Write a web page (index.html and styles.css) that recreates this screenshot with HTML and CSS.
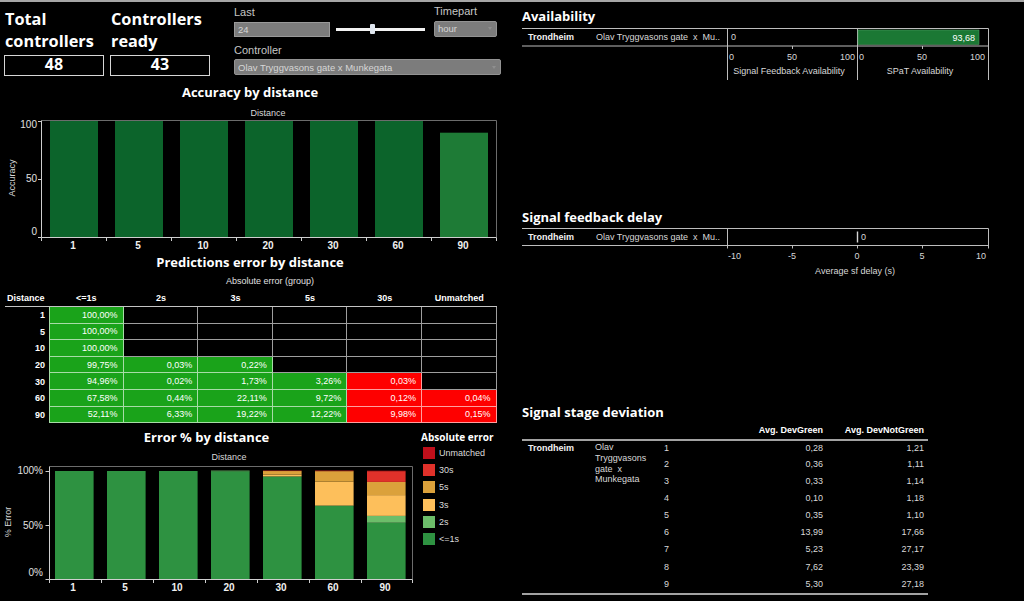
FILE: index.html
```html
<!DOCTYPE html>
<html lang="en">
<head>
<meta charset="utf-8">
<title>Controllers dashboard</title>
<link rel="stylesheet" href="styles.css">
</head>
<body>
<div class="page">
  <div class="left">
    <div class="top">
      <div class="kpi kpi-first">
        <div class="kpi-title">Total<br>controllers</div>
        <div class="kpi-box">48</div>
      </div>
      <div class="kpi">
        <div class="kpi-title">Controllers<br>ready</div>
        <div class="kpi-box">43</div>
      </div>
      <div class="controls">
        <div class="ctrl-row">
          <div class="field">
            <div class="label">Last</div>
            <div class="last-row">
              <div class="input">24</div>
              <div class="slider"><span class="thumb"></span></div>
            </div>
          </div>
          <div class="field timepart">
            <div class="label">Timepart</div>
            <div class="select select-small"><span>hour</span><span class="arrow"></span></div>
          </div>
        </div>
        <div class="field controller">
          <div class="label">Controller</div>
          <div class="select select-wide"><span>Olav Tryggvasons gate x Munkegata</span><span class="arrow"></span></div>
        </div>
      </div>
    </div>

    <section class="block">
      <h2 class="title">Accuracy by distance</h2>
      <svg class="chart" width="500" height="154" viewBox="0 0 500 154">
        <text x="268" y="16" text-anchor="middle">Distance</text>
        <text transform="translate(15 78) rotate(-90)" text-anchor="middle">Accuracy</text>
        <rect x="50" y="21" width="48" height="116" fill="#0c642b"/>
        <rect x="115" y="21" width="48" height="116" fill="#0c642b"/>
        <rect x="180" y="21" width="48" height="116" fill="#0c642b"/>
        <rect x="245" y="21" width="48" height="116" fill="#0c642b"/>
        <rect x="310" y="21" width="48" height="116" fill="#0c642b"/>
        <rect x="375" y="21" width="48" height="116" fill="#0c642b"/>
        <rect x="440" y="32.7" width="48" height="104.3" fill="#1e7b36"/>
        <path d="M41.5 20.5 H496.5 V137" stroke="#6c6c6c" fill="none"/>
        <path d="M41.5 20.5 V137.5 H496.5" stroke="#cfcfcf" fill="none"/>
        <path d="M38 21.5 H41.5 M38 79.5 H41.5 M38 137.5 H41.5" stroke="#cfcfcf"/>
        <path d="M41.5 137.5 V141 M106.5 137.5 V141 M171.5 137.5 V141 M236.5 137.5 V141 M301.5 137.5 V141 M366.5 137.5 V141 M431.5 137.5 V141 M496.5 137.5 V141" stroke="#cfcfcf"/>
        <text class="tick" x="37" y="28" text-anchor="end">100</text>
        <text class="tick" x="37" y="82" text-anchor="end">50</text>
        <text class="tick" x="37" y="135" text-anchor="end">0</text>
        <text class="xl" x="73" y="149" text-anchor="middle">1</text>
        <text class="xl" x="138" y="149" text-anchor="middle">5</text>
        <text class="xl" x="203" y="149" text-anchor="middle">10</text>
        <text class="xl" x="268" y="149" text-anchor="middle">20</text>
        <text class="xl" x="333" y="149" text-anchor="middle">30</text>
        <text class="xl" x="398" y="149" text-anchor="middle">60</text>
        <text class="xl" x="463" y="149" text-anchor="middle">90</text>
      </svg>
    </section>

    <section class="block">
      <h2 class="title">Predictions error by distance</h2>
      <div class="caption">Absolute error (group)</div>
      <table class="pred">
        <colgroup><col class="pd"><col class="pc"><col class="pc"><col class="pc"><col class="pc"><col class="pc"><col class="pc"></colgroup>
        <thead>
          <tr><th class="dist-h">Distance</th><th>&lt;=1s</th><th>2s</th><th>3s</th><th>5s</th><th>30s</th><th>Unmatched</th></tr>
        </thead>
        <tbody>
          <tr><th>1</th><td class="g">100,00%</td><td></td><td></td><td></td><td></td><td></td></tr>
          <tr><th>5</th><td class="g">100,00%</td><td></td><td></td><td></td><td></td><td></td></tr>
          <tr><th>10</th><td class="g">100,00%</td><td></td><td></td><td></td><td></td><td></td></tr>
          <tr><th>20</th><td class="g">99,75%</td><td class="g">0,03%</td><td class="g">0,22%</td><td></td><td></td><td></td></tr>
          <tr><th>30</th><td class="g">94,96%</td><td class="g">0,02%</td><td class="g">1,73%</td><td class="g">3,26%</td><td class="r">0,03%</td><td></td></tr>
          <tr><th>60</th><td class="g">67,58%</td><td class="g">0,44%</td><td class="g">22,11%</td><td class="g">9,72%</td><td class="r">0,12%</td><td class="r">0,04%</td></tr>
          <tr><th>90</th><td class="g">52,11%</td><td class="g">6,33%</td><td class="g">19,22%</td><td class="g">12,22%</td><td class="r">9,98%</td><td class="r">0,15%</td></tr>
        </tbody>
      </table>
    </section>

    <section class="block error-block">
      <div class="error-chart">
        <h2 class="title">Error % by distance</h2>
        <svg class="chart" width="413" height="156" viewBox="0 0 413 156">
          <text x="229" y="15" text-anchor="middle">Distance</text>
          <text transform="translate(11 77) rotate(-90)" text-anchor="middle">% Error</text>
          <rect x="55" y="26" width="38.6" height="108" fill="#2e9241"/>
          <rect x="107" y="26" width="38.6" height="108" fill="#2e9241"/>
          <rect x="159" y="26" width="38.6" height="108" fill="#2e9241"/>
          <rect x="211" y="26.27" width="38.6" height="107.73" fill="#2e9241"/>
          <rect x="211" y="25.6" width="38.6" height="0.7" fill="#6cbd6a"/>
          <rect x="263" y="31.44" width="38.6" height="102.56" fill="#2e9241"/>
          <rect x="263" y="29.55" width="38.6" height="1.89" fill="#fdbf5b"/>
          <rect x="263" y="26.03" width="38.6" height="3.52" fill="#dba13b"/>
          <rect x="263" y="25.6" width="38.6" height="0.45" fill="#e0312a"/>
          <rect x="315" y="61.01" width="38.6" height="72.99" fill="#2e9241"/>
          <rect x="315" y="60.53" width="38.6" height="0.48" fill="#6cbd6a"/>
          <rect x="315" y="36.65" width="38.6" height="23.88" fill="#fdbf5b"/>
          <rect x="315" y="26.15" width="38.6" height="10.5" fill="#dba13b"/>
          <rect x="315" y="25.6" width="38.6" height="0.55" fill="#e0312a"/>
          <rect x="367" y="77.72" width="38.6" height="56.28" fill="#2e9241"/>
          <rect x="367" y="70.88" width="38.6" height="6.84" fill="#6cbd6a"/>
          <rect x="367" y="50.12" width="38.6" height="20.76" fill="#fdbf5b"/>
          <rect x="367" y="36.92" width="38.6" height="13.2" fill="#dba13b"/>
          <rect x="367" y="26.14" width="38.6" height="10.78" fill="#e0312a"/>
          <rect x="367" y="25.7" width="38.6" height="0.44" fill="#bf0f1b"/>
          <path d="M49.5 21.5 H412.5 V134" stroke="#6c6c6c" fill="none"/>
          <path d="M49.5 21.5 V134.5 H412.5" stroke="#cfcfcf" fill="none"/>
          <path d="M45.5 26.5 H49.5 M45.5 80.5 H49.5 M45.5 134.5 H49.5" stroke="#cfcfcf"/>
          <path d="M49.5 134.5 V138 M101.5 134.5 V138 M153.5 134.5 V138 M205.5 134.5 V138 M257.5 134.5 V138 M309.5 134.5 V138 M361.5 134.5 V138 M412.5 134.5 V138" stroke="#cfcfcf"/>
          <text class="tick" x="43" y="28.5" text-anchor="end">100%</text>
          <text class="tick" x="43" y="84" text-anchor="end">50%</text>
          <text class="tick" x="43" y="131" text-anchor="end">0%</text>
          <text class="xl" x="73" y="146" text-anchor="middle">1</text>
          <text class="xl" x="125" y="146" text-anchor="middle">5</text>
          <text class="xl" x="177" y="146" text-anchor="middle">10</text>
          <text class="xl" x="229" y="146" text-anchor="middle">20</text>
          <text class="xl" x="281" y="146" text-anchor="middle">30</text>
          <text class="xl" x="333" y="146" text-anchor="middle">60</text>
          <text class="xl" x="385" y="146" text-anchor="middle">90</text>
        </svg>
      </div>
      <div class="legend">
        <div class="legend-title">Absolute error</div>
        <div class="legend-item"><span class="sw sw-unm"></span>Unmatched</div>
        <div class="legend-item"><span class="sw sw-30"></span>30s</div>
        <div class="legend-item"><span class="sw sw-5"></span>5s</div>
        <div class="legend-item"><span class="sw sw-3"></span>3s</div>
        <div class="legend-item"><span class="sw sw-2"></span>2s</div>
        <div class="legend-item"><span class="sw sw-1"></span>&lt;=1s</div>
      </div>
    </section>
  </div>

  <div class="right">
    <h2 class="title rtitle first">Availability</h2>
    <svg class="chart" width="470" height="57" viewBox="0 0 470 57">
      <path d="M0 3.5 H466.5 M0 21 H466.5" stroke="#bdbdbd" fill="none"/>
      <path d="M205.5 3.5 V55 M335.5 3.5 V55 M466.5 3.5 V55" stroke="#bdbdbd" fill="none"/>
      <text class="b" x="6" y="15">Trondheim</text>
      <text x="74" y="15">Olav Tryggvasons gate&#160;&#160;x&#160;&#160;Mu..</text>
      <text x="209" y="15">0</text>
      <rect x="336" y="5" width="121" height="14.5" fill="#1b7834" stroke="#4f9a62" stroke-width="0.6"/>
      <text class="w" x="453" y="15.5" text-anchor="end">93,68</text>
      <path d="M270.5 21 V24 M400.5 21 V24" stroke="#bdbdbd"/>
      <text x="207" y="34.5">0</text>
      <text x="270" y="34.5" text-anchor="middle">50</text>
      <text x="333" y="34.5" text-anchor="end">100</text>
      <text x="337" y="34.5">0</text>
      <text x="400" y="34.5" text-anchor="middle">50</text>
      <text x="463" y="34.5" text-anchor="end">100</text>
      <text x="267" y="49" text-anchor="middle">Signal Feedback Availability</text>
      <text x="398" y="49" text-anchor="middle">SPaT Availability</text>
    </svg>

    <h2 class="title rtitle gap">Signal feedback delay</h2>
    <svg class="chart" width="470" height="50" viewBox="0 0 470 50">
      <path d="M0 2.5 H466.5 M0 19.5 H466.5" stroke="#bdbdbd" fill="none"/>
      <path d="M205.5 2.5 V22.5 M466.5 2.5 V22.5 M270.5 19.5 V22.5 M335.5 19.5 V22.5 M400.5 19.5 V22.5" stroke="#bdbdbd" fill="none"/>
      <path d="M335.5 5.5 V16.5" stroke="#d6d6d6" stroke-width="1.4"/>
      <text class="b" x="6" y="14">Trondheim</text>
      <text x="74" y="14">Olav Tryggvasons gate&#160;&#160;x&#160;&#160;Mu..</text>
      <text x="339" y="14">0</text>
      <text x="206" y="33">-10</text>
      <text x="270" y="33" text-anchor="middle">-5</text>
      <text x="335" y="33" text-anchor="middle">0</text>
      <text x="400" y="33" text-anchor="middle">5</text>
      <text x="464" y="33" text-anchor="end">10</text>
      <text x="333" y="47.5" text-anchor="middle">Average sf delay (s)</text>
    </svg>

    <h2 class="title rtitle gap2">Signal stage deviation</h2>
    <table class="stage">
      <colgroup><col class="c1"><col class="c2"><col class="c3"><col class="c4"><col class="c5"></colgroup>
      <thead>
        <tr><th></th><th></th><th></th><th class="num">Avg. DevGreen</th><th class="num">Avg. DevNotGreen</th></tr>
      </thead>
      <tbody>
        <tr><td class="city" rowspan="9">Trondheim</td><td class="ctrl" rowspan="9">Olav Tryggvasons gate&nbsp; x&nbsp; Munkegata</td><td>1</td><td class="num">0,28</td><td class="num">1,21</td></tr>
        <tr><td>2</td><td class="num">0,36</td><td class="num">1,11</td></tr>
        <tr><td>3</td><td class="num">0,33</td><td class="num">1,14</td></tr>
        <tr><td>4</td><td class="num">0,10</td><td class="num">1,18</td></tr>
        <tr><td>5</td><td class="num">0,35</td><td class="num">1,10</td></tr>
        <tr><td>6</td><td class="num">13,99</td><td class="num">17,66</td></tr>
        <tr><td>7</td><td class="num">5,23</td><td class="num">27,17</td></tr>
        <tr><td>8</td><td class="num">7,62</td><td class="num">23,39</td></tr>
        <tr><td>9</td><td class="num">5,30</td><td class="num">27,18</td></tr>
      </tbody>
    </table>
  </div>
</div>
</body>
</html>
```

FILE: styles.css
```css
* { box-sizing: border-box; }
html, body { margin: 0; padding: 0; overflow: hidden; background: #000; }
body {
  width: 1024px;
  height: 601px;
  color: #e2e2e2;
  font-family: "Liberation Sans", Arial, sans-serif;
  font-size: 9px;
  border-top: 2px solid #a6a6a6;
}
.page { display: flex; align-items: flex-start; }
.left { width: 515px; flex: none; }
.right { flex: 1; padding-left: 7px; }

/* top row */
.top { display: flex; align-items: flex-start; height: 82px; }
.kpi { width: 100px; margin-top: 5.5px; margin-left: 6px; }
.kpi-first { margin-left: 4px; }
.kpi-title {
  font-family: "Open Sans", "Liberation Sans", sans-serif;
  font-weight: 700;
  font-size: 16.3px;
  line-height: 22.3px;
  padding-left: 1px;
  color: #fff;
  white-space: nowrap;
}
.kpi-box {
  margin-top: 3px;
  height: 21px;
  border: 1px solid #d6d6d6;
  text-align: center;
  font-family: "Open Sans", "Liberation Sans", sans-serif;
  font-weight: 700;
  font-size: 16px;
  line-height: 17px;
  color: #fff;
}
.controls { margin-left: 24px; margin-top: 3.5px; width: 267px; }
.ctrl-row { display: flex; }
.label { font-size: 11px; line-height: 13px; color: #c6c6c6; margin-bottom: 3px; }
.last-row { display: flex; align-items: center; }
.input {
  width: 96px; height: 15px;
  background: #7c7c7c; border: 1px solid #9a9a9a;
  color: #d6d6d6; font-size: 9.5px; line-height: 13px; padding-left: 3px;
}
.slider { width: 89px; height: 3px; margin-left: 6px; background: #f2f2f2; position: relative; }
.thumb {
  position: absolute; left: 34px; top: -4px;
  width: 5px; height: 10px; background: #dfe6ef; border-radius: 1px;
}
.timepart { margin-left: 9px; margin-top: -1px; }
.select {
  display: flex; justify-content: space-between; align-items: center;
  height: 16px; background: #7c7c7c; border: 1px solid #939393; border-radius: 2px;
  color: #d6d6d6; font-size: 9.5px; padding: 0 4px 0 3px;
}
.select-small { width: 63px; margin-top: 1px; }
.select-wide { width: 267px; }
.arrow { width: 0; height: 0; border-left: 2.5px solid transparent; border-right: 2.5px solid transparent; border-top: 3px solid #8f8f8f; }
.controller { margin-top: 7px; }
.controller .label { margin-bottom: 2.5px; }

/* sections */
.block { width: 500px; }
.title {
  margin: 0;
  font-family: "Open Sans", "Liberation Sans", sans-serif;
  font-weight: 700;
  font-size: 13px;
  line-height: 16px;
  color: #fff;
  text-align: center;
}
.chart { display: block; }
.chart text { font-family: "Liberation Sans", Arial, sans-serif; font-size: 9px; fill: #d8d8d8; }
.chart text.tick { font-size: 10px; fill: #e0e0e0; }
.chart text.xl { font-size: 10px; font-weight: 700; fill: #f0f0f0; }
.chart text.b { font-weight: 700; fill: #f2f2f2; }
.chart text.w { fill: #fff; }

.caption { margin-top: 4px; line-height: 14px; padding-left: 40px; text-align: center; color: #e0e0e0; }
.pred { margin-left: 5px; width: 491.6px; table-layout: fixed; border-collapse: separate; border-spacing: 0; }
.pred col.pd { width: 44px; }
.pred col.pc { width: 74.6px; }
.pred thead th {
  height: 19px; padding: 0 0 2px; vertical-align: bottom;
  font-weight: 700; line-height: 12px; text-align: center; color: #fff;
  border-bottom: 1px solid #c4c4c4;
}
.pred thead th.dist-h { text-align: left; padding-left: 2px; }
.pred tbody tr { height: 16.6px; }
.pred tbody th { padding: 0 4px 0 0; text-align: right; font-weight: 700; line-height: 12px; color: #fff; }
.pred tbody td {
  padding: 0 5px 0 0; text-align: right; line-height: 12px; color: #fff;
  border-right: 1px solid rgba(255,255,255,0.62);
  border-bottom: 1px solid rgba(255,255,255,0.62);
}
.pred tbody td:first-of-type { border-left: 1px solid rgba(255,255,255,0.62); }
.pred td.g { background: #1aa31a; }
.pred td.r { background: #fe0000; }

.error-block { display: flex; width: 515px; margin-top: 6px; }
.error-chart { width: 413px; flex: none; }
.legend { margin-left: 8px; }
.legend-title {
  font-family: "Open Sans", "Liberation Sans", sans-serif;
  font-weight: 700; font-size: 10px; line-height: 14px; padding-top: 1px; color: #fff;
  white-space: nowrap;
}
.legend-item { display: flex; align-items: center; height: 17.3px; color: #dcdcdc; }
.sw { width: 12px; height: 12px; margin-left: 2px; margin-right: 4px; }
.sw-unm { background: #bf0f1b; }
.sw-30 { background: #e0312a; }
.sw-5 { background: #dba13b; }
.sw-3 { background: #fdbf5b; }
.sw-2 { background: #6cbd6a; }
.sw-1 { background: #2e9241; }

/* right */
.rtitle { text-align: left; line-height: 18px; }
.rtitle.first { margin-top: 5px; }
.rtitle.gap { margin-top: 126px; }
.rtitle.gap2 { margin-top: 126.7px; }

.stage { border-collapse: collapse; table-layout: fixed; width: 406px; border-bottom: 2px solid #a2a2a2; }
.stage col.c1 { width: 68px; }
.stage col.c2 { width: 70px; }
.stage col.c3 { width: 63px; }
.stage col.c4 { width: 104px; }
.stage col.c5 { width: 101px; }
.stage thead th {
  height: 19.3px; padding: 0 4px 3px; vertical-align: bottom;
  font-weight: 700; line-height: 12px; color: #fff; text-align: left;
  border-bottom: 2px solid #a2a2a2;
}
.stage thead th.num { text-align: right; }
.stage tbody tr { height: 17.08px; }
.stage tbody td { padding: 1px 4px 0; vertical-align: top; line-height: 12px; color: #d8d8d8; }
.stage td.num { text-align: right; }
.stage td.city { padding-left: 6px; font-weight: 700; color: #f2f2f2; }
.stage td.ctrl { padding-left: 5px; line-height: 10.6px; padding-top: 1.5px; }
```
